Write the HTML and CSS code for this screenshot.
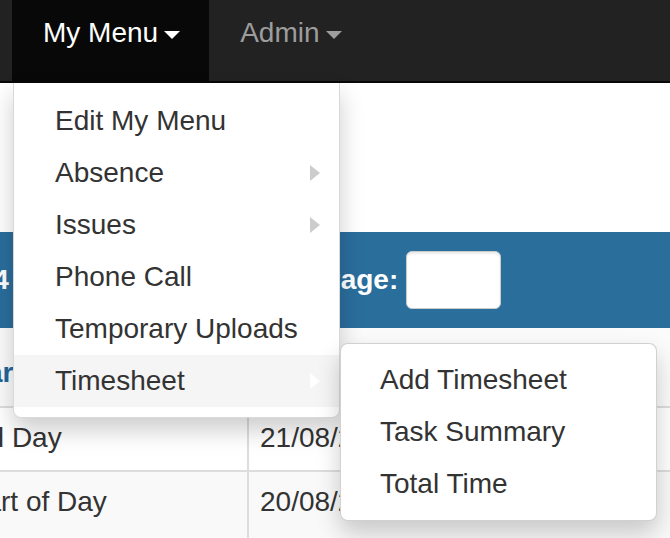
FILE: index.html
```html
<!doctype html>
<html lang="en">
    <head>
        <meta charset="UTF-8" />
        <meta name="viewport" content="width=device-width, initial-scale=1.0" />
        <title>Absence</title>
        <link rel="stylesheet" href="styles.css">
    </head>
    <body>
        <nav class="navbar">
            <ul class="nav">
                <li class="nav-item">
                    <a class="nav-link active" href="#">My Menu<span class="caret"></span></a>
                    <ul class="dropdown">
                        <li><a href="#">Edit My Menu</a></li>
                        <li class="has-sub"><a href="#">Absence</a></li>
                        <li class="has-sub"><a href="#">Issues</a></li>
                        <li><a href="#">Phone Call</a></li>
                        <li><a href="#">Temporary Uploads</a></li>
                        <li class="has-sub open">
                            <a href="#">Timesheet</a>
                            <ul class="dropdown submenu">
                                <li><a href="#">Add Timesheet</a></li>
                                <li><a href="#">Task Summary</a></li>
                                <li><a href="#">Total Time</a></li>
                            </ul>
                        </li>
                    </ul>
                </li>
                <li class="nav-item">
                    <a class="nav-link" href="#">Admin<span class="caret"></span></a>
                </li>
            </ul>
        </nav>

        <div class="content">
            <div class="pager">
                <span class="pager-info">of 4</span>
                <label for="pageInput">Page:</label>
                <input type="text" id="pageInput" />
            </div>
            <table>
                <thead>
                    <tr>
                        <th class="col-type"><a href="#">Start</a></th>
                        <th><a href="#">Date</a></th>
                    </tr>
                </thead>
                <tbody>
                    <tr>
                        <td>Mid Day</td>
                        <td>21/08/2015</td>
                    </tr>
                    <tr class="striped">
                        <td>Start of Day</td>
                        <td>20/08/2015</td>
                    </tr>
                </tbody>
            </table>
        </div>
    </body>
</html>
```

FILE: styles.css
```css
body {
    margin: 0;
    font-family: "Liberation Sans", Arial, sans-serif;
    font-size: 28px;
    color: #333;
    background: #fff;
    overflow: hidden;
}

a {
    text-decoration: none;
}

.navbar {
    background: #222;
    border-bottom: 2px solid #080808;
    height: 81px;
    position: relative;
    z-index: 10;
}

.nav {
    list-style: none;
    margin: 0;
    padding: 0 0 0 12px;
    display: flex;
}

.nav-item {
    position: relative;
}

.nav-link {
    display: block;
    padding: 13px 29px 28px 31px;
    line-height: 40px;
    color: #9d9d9d;
}

.nav-link.active {
    background: #080808;
    color: #fff;
}

.caret {
    display: inline-block;
    width: 0;
    height: 0;
    margin-left: 6px;
    vertical-align: middle;
    border-top: 8px solid;
    border-left: 8px solid transparent;
    border-right: 8px solid transparent;
}

.dropdown {
    position: absolute;
    top: calc(100% + 2px);
    left: 1px;
    width: 325px;
    margin: 0;
    padding: 12px 0 10px;
    list-style: none;
    background: #fff;
    border: 1px solid rgba(0, 0, 0, 0.15);
    border-top: 0;
    border-radius: 0 0 8px 8px;
    box-shadow: 0 12px 24px rgba(0, 0, 0, 0.2);
}

.dropdown li {
    position: relative;
}

.dropdown a {
    display: block;
    padding: 6px 40px 6px 41px;
    line-height: 40px;
    color: #333;
    white-space: nowrap;
}

.has-sub > a::after {
    content: "";
    position: absolute;
    right: 19px;
    top: 18px;
    border-left: 10px solid #ccc;
    border-top: 8px solid transparent;
    border-bottom: 8px solid transparent;
}

.has-sub.open > a {
    background: #f5f5f5;
}

.has-sub.open > a::after {
    border-left-color: #fff;
}

.submenu {
    top: -12px;
    left: calc(100% + 1px);
    width: 315px;
    padding: 10px 0;
    border: 1px solid rgba(0, 0, 0, 0.18);
    border-radius: 8px;
}

.submenu a {
    padding-left: 39px;
}

.content {
    margin-left: -52px;
    padding-top: 149px;
}

.pager {
    display: flex;
    align-items: center;
    height: 96px;
    padding: 0 11px;
    background: #2a6e9c;
    color: #fff;
    font-weight: bold;
}

.pager-info {
    width: 363px;
}

.pager input {
    box-sizing: border-box;
    width: 95px;
    height: 58px;
    margin-left: 8px;
    border: 1px solid #ccc;
    border-radius: 6px;
    box-shadow: inset 0 2px 2px rgba(0, 0, 0, 0.075);
}

table {
    width: 100%;
    border-collapse: collapse;
}

th,
td {
    padding: 0 11px;
    text-align: left;
    line-height: 40px;
    border-bottom: 2px solid #ddd;
}

th + th,
td + td {
    border-left: 2px solid #ddd;
}

.col-type {
    width: 277px;
}

th {
    height: 65px;
    vertical-align: bottom;
    padding-bottom: 13px;
    background: #fbfbfb;
}

th a {
    color: #23679a;
}

td {
    height: 52px;
    padding-top: 10px;
    vertical-align: top;
}

.striped td {
    height: 80px;
    background: #f9f9f9;
}
```
